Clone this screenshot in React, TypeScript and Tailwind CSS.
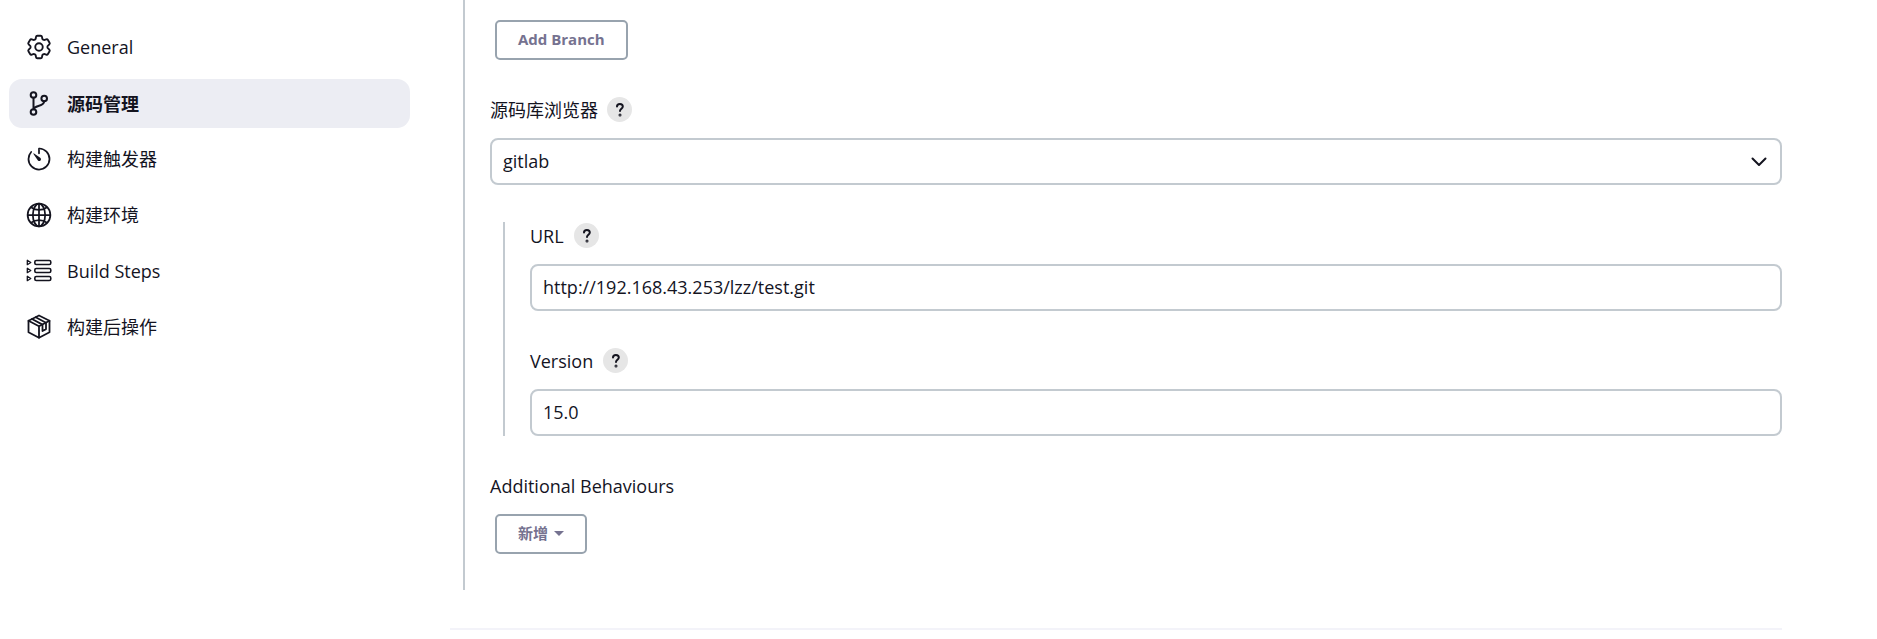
import React from "react";
import { HiOutlineCog6Tooth } from "react-icons/hi2";
import { IoGlobeOutline, IoTimerOutline } from "react-icons/io5";

const BranchIcon = () => (
  <svg viewBox="0 0 26 26" className="size-[26px]" fill="none" stroke="currentColor" strokeWidth="2" strokeLinecap="round">
    <circle cx="7.500" cy="4" r="2.800" />
    <circle cx="7.500" cy="21" r="2.800" />
    <circle cx="18.200" cy="7.500" r="2.800" />
    <path d="M7.500 6.800v11.400M18.200 10.300c-.6 5.800-9.700 3.600-10.700 7.900" />
  </svg>
);

const StepsIcon = () => (
  <svg viewBox="0 0 26 26" className="size-[26px]" fill="none" stroke="currentColor" strokeWidth="1.600" strokeLinejoin="round">
    <rect x="8.800" y="2.500" width="16" height="4" rx="1.500" />
    <rect x="8.800" y="10.500" width="16" height="4" rx="1.500" />
    <rect x="8.800" y="18.500" width="16" height="4" rx="1.500" />
    <path d="M1.300 2.300v4.400L4.800 4.500zM1.300 10.300v4.400l3.500-2.200zM1.300 18.300v4.400l3.500-2.200z" strokeWidth="1.300" />
  </svg>
);

const PackageIcon = () => (
  <svg viewBox="0 0 26 26" className="size-[26px]" fill="none" stroke="currentColor" strokeWidth="1.800" strokeLinejoin="round" strokeLinecap="round">
    <path d="M13 1.500L2.500 6.800v11.400L13 23.700l10.500-5.500V6.800z" />
    <path d="M2.500 6.800L13 12.300l10.500-5.500M13 12.300v11.400" />
    <path d="M6 5l10.500 5.600v6.400l3.500-1.900V8.700L9.700 3.300" />
  </svg>
);

const navItems = [
  { label: "General", icon: <HiOutlineCog6Tooth className="size-[30px] shrink-0" /> },
  { label: "源码管理", icon: <BranchIcon />, active: true },
  { label: "构建触发器", icon: <IoTimerOutline className="size-7 shrink-0" /> },
  { label: "构建环境", icon: <IoGlobeOutline className="size-7 shrink-0" /> },
  { label: "Build Steps", icon: <StepsIcon /> },
  { label: "构建后操作", icon: <PackageIcon /> },
];

const HelpButton = ({ topic }: { topic: string }) => (
  <button
    type="button"
    aria-label={topic}
    className="flex size-[25px] items-center justify-center rounded-full bg-[#e6e6e6]"
  >
    <svg viewBox="0 0 25 25" className="size-[25px]" fill="none" stroke="currentColor" strokeWidth="2" strokeLinecap="round">
      <path d="M10 9.500c0-3.400 5.800-3.400 5.800 0 0 2.200-2.800 2.300-2.800 4.600" />
      <circle cx="13" cy="18" r="0.500" />
    </svg>
  </button>
);

const inputStyle =
  "block h-[47px] w-full rounded-lg border-2 border-[#c3cad0] bg-white px-[11px] pb-[2px] outline-none focus:border-[#8a94a0]";
const buttonStyle =
  "flex h-10 items-center rounded-[5px] border-2 border-[#98a3ae] px-[21px] pb-[2px] text-[15px] font-bold text-[#757290]";

const App = () => {
  return (
    <div className="flex bg-white font-['Open_Sans','Noto_Sans_CJK_SC',sans-serif] text-lg leading-6 text-[#14141f]">
      <aside className="w-[450px] shrink-0 pt-[23px] pr-10 pl-[9px]">
        <nav className="flex flex-col gap-[7px]">
          {navItems.map((item) => (
            <a
              key={item.label}
              href="#"
              className={
                item.active
                  ? "flex h-[49px] items-center gap-[15px] rounded-[13px] bg-[#ecedf3] px-[17px] font-bold"
                  : "flex h-[49px] items-center gap-[15px] rounded-[13px] px-[17px] pb-[2px]"
              }
            >
              <span className="flex w-[26px] shrink-0 justify-center">{item.icon}</span>
              <span>{item.label}</span>
            </a>
          ))}
        </nav>
      </aside>

      <main className="min-w-0 grow pr-[95px]">
        <form className="ml-[13px] flex flex-col gap-[37px] border-l-2 border-[#c3cad0] pt-5 pb-9 pl-[25px]">
          <div className="flex pl-[5px]">
            <button type="button" className={buttonStyle}>Add Branch</button>
          </div>

          <div>
            <div className="mb-4 flex h-[25px] items-center gap-[9px]">
              <label htmlFor="browser">源码库浏览器</label>
              <HelpButton topic="源码库浏览器" />
            </div>
            <div className="relative">
              <select id="browser" className={`${inputStyle} appearance-none`}>
                <option>gitlab</option>
              </select>
              <svg
                viewBox="0 0 16 10"
                className="pointer-events-none absolute top-[19px] right-[15px] h-[10px] w-4"
                fill="none"
                stroke="currentColor"
                strokeWidth="2"
                strokeLinecap="round"
                strokeLinejoin="round"
              >
                <path d="M1.500 1.500L8 8l6.500-6.500" />
              </svg>
            </div>
          </div>

          <div className="ml-[13px] flex flex-col gap-[37px] border-l-2 border-[#c3cad0] pt-px pl-[25px]">
            <div>
              <div className="mb-4 flex h-[25px] items-center gap-[10px]">
                <label htmlFor="url">URL</label>
                <HelpButton topic="URL" />
              </div>
              <input id="url" type="text" defaultValue="http://192.168.43.253/lzz/test.git" className={inputStyle} />
            </div>
            <div>
              <div className="mb-4 flex h-[25px] items-center gap-[10px]">
                <label htmlFor="version">Version</label>
                <HelpButton topic="Version" />
              </div>
              <input id="version" type="text" defaultValue="15.0" className={inputStyle} />
            </div>
          </div>

          <div>
            <div className="mb-4 flex h-[25px] items-center">Additional Behaviours</div>
            <div className="flex pl-[5px]">
              <button type="button" className={`${buttonStyle} gap-[6px]`}>
                新增
                <svg viewBox="0 0 10 5" className="h-[5px] w-[10px]" fill="currentColor">
                  <path d="M0 0h10L5 5z" />
                </svg>
              </button>
            </div>
          </div>
        </form>
        <hr className="mt-[38px] border-t-2 border-[#f3f3f9]" />
      </main>
    </div>
  );
};

export default App;
